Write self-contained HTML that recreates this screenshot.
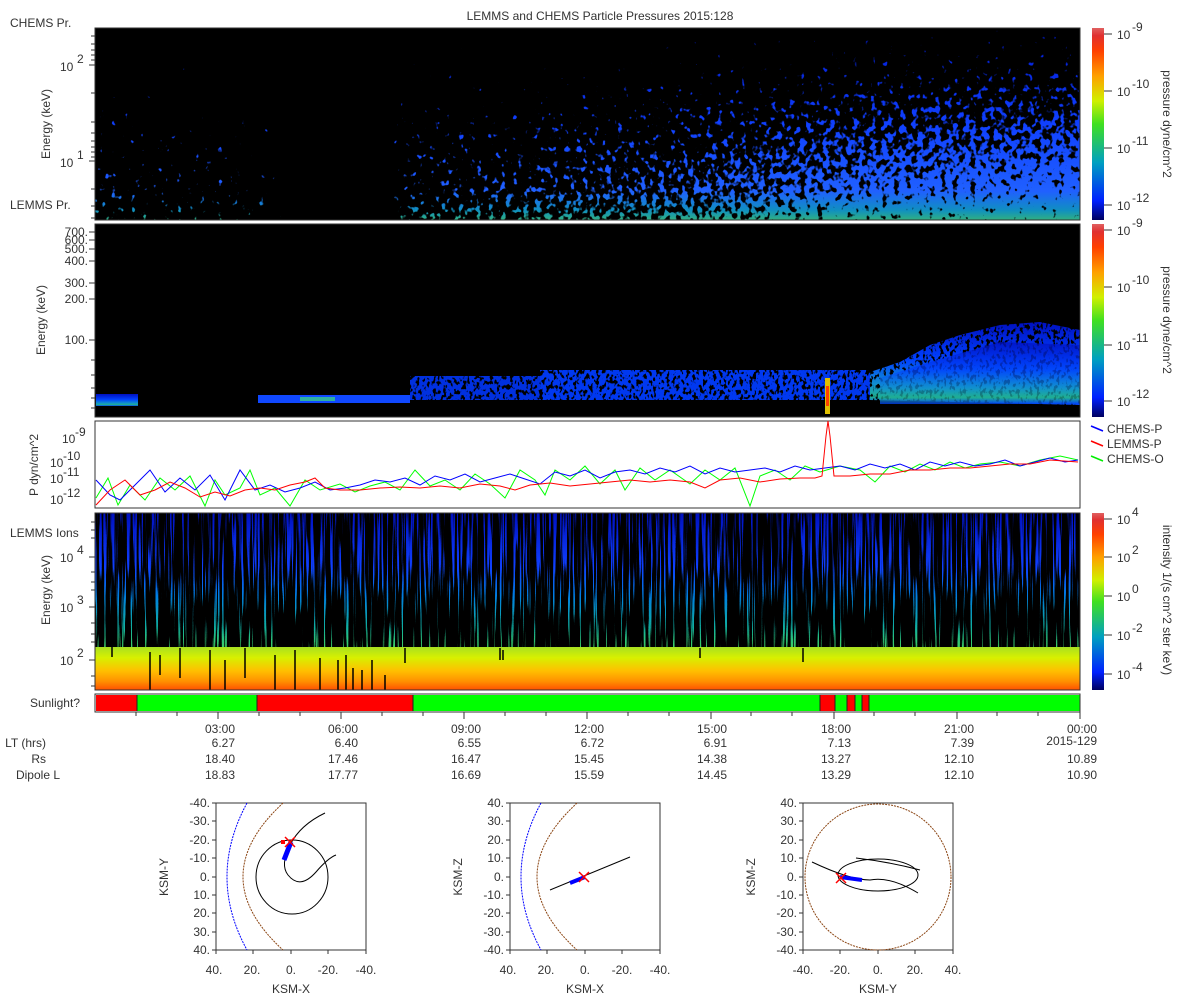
<!DOCTYPE html>
<html><head><meta charset="utf-8"><style>
html,body{margin:0;padding:0;background:#fff;}
svg{display:block;font-family:"Liberation Sans","DejaVu Sans",sans-serif;}
text{fill:#333;font-size:12px;}
</style></head><body>
<svg width="1200" height="1000" viewBox="0 0 1200 1000" xmlns="http://www.w3.org/2000/svg">
<defs>
<linearGradient id="cb" x1="0" y1="1" x2="0" y2="0">
<stop offset="0" stop-color="#000060"/><stop offset="0.1" stop-color="#0020ff"/><stop offset="0.3" stop-color="#00a0c0"/><stop offset="0.5" stop-color="#40e020"/><stop offset="0.62" stop-color="#d0f000"/><stop offset="0.75" stop-color="#ffa000"/><stop offset="0.88" stop-color="#ff4000"/><stop offset="0.96" stop-color="#e03030"/><stop offset="1" stop-color="#e06060"/>
</linearGradient>
<linearGradient id="p4" x1="0" y1="0" x2="0" y2="1">
<stop offset="0" stop-color="#a8e020"/><stop offset="0.25" stop-color="#d8f000"/><stop offset="0.55" stop-color="#ffc000"/><stop offset="0.8" stop-color="#ff9000"/><stop offset="1" stop-color="#ff5000"/>
</linearGradient>
<linearGradient id="p4c" x1="0" y1="0" x2="0" y2="1">
<stop offset="0" stop-color="#0010c0"/><stop offset="0.4" stop-color="#1040ff"/><stop offset="0.62" stop-color="#0080e0"/><stop offset="0.85" stop-color="#10b0a0"/><stop offset="1" stop-color="#40d060"/>
</linearGradient>
<linearGradient id="p2b" x1="0" y1="0" x2="0" y2="1">
<stop offset="0" stop-color="#0010c0"/><stop offset="0.45" stop-color="#0040ff"/><stop offset="0.75" stop-color="#1090d0"/><stop offset="0.9" stop-color="#20b090"/><stop offset="1" stop-color="#0040ff"/>
</linearGradient>
<linearGradient id="c1" x1="0" y1="0" x2="0" y2="1">
<stop offset="0" stop-color="#0018d0"/><stop offset="0.5" stop-color="#1040ff"/><stop offset="0.85" stop-color="#2060ff"/><stop offset="0.95" stop-color="#1090c0"/><stop offset="1" stop-color="#30b080"/>
</linearGradient>
<linearGradient id="h1" x1="0" y1="0" x2="1" y2="0">
<stop offset="0" stop-color="#606060"/><stop offset="0.18" stop-color="#505050"/><stop offset="0.2" stop-color="#202020"/><stop offset="0.29" stop-color="#202020"/><stop offset="0.31" stop-color="#686868"/><stop offset="0.6" stop-color="#909090"/><stop offset="0.78" stop-color="#b8b8b8"/><stop offset="1" stop-color="#d0d0d0"/>
</linearGradient>
<linearGradient id="v1" x1="0" y1="0" x2="0" y2="1">
<stop offset="0" stop-color="#000" stop-opacity="0.75"/><stop offset="0.5" stop-color="#000" stop-opacity="0.35"/><stop offset="1" stop-color="#000" stop-opacity="0"/>
</linearGradient>
<linearGradient id="v4" x1="0" y1="0" x2="0" y2="1">
<stop offset="0" stop-color="#7c7c7c"/><stop offset="0.4" stop-color="#787878"/><stop offset="0.6" stop-color="#5c5c5c"/><stop offset="0.85" stop-color="#707070"/><stop offset="1" stop-color="#909090"/>
</linearGradient>
<filter id="sp1" x="0" y="0" width="1" height="1" color-interpolation-filters="sRGB">
<feTurbulence type="fractalNoise" baseFrequency="0.17 0.15" numOctaves="2" seed="4" result="n"/>
<feColorMatrix in="n" type="matrix" values="1 0 0 0 0  1 0 0 0 0  1 0 0 0 0  0 0 0 0 1" result="no"/>
<feComposite in="SourceGraphic" in2="no" operator="arithmetic" k1="0" k2="1" k3="1" k4="-1" result="c"/>
<feColorMatrix in="c" type="matrix" values="0 0 0 0 1  0 0 0 0 1  0 0 0 0 1  10 0 0 0 0"/>
</filter>
<filter id="sp4" x="0" y="0" width="1" height="1" color-interpolation-filters="sRGB">
<feTurbulence type="fractalNoise" baseFrequency="0.45 0.012" numOctaves="2" seed="7" result="n"/>
<feColorMatrix in="n" type="matrix" values="1 0 0 0 0  1 0 0 0 0  1 0 0 0 0  0 0 0 0 1" result="no"/>
<feComposite in="SourceGraphic" in2="no" operator="arithmetic" k1="0" k2="1" k3="1" k4="-1" result="c"/>
<feColorMatrix in="c" type="matrix" values="0 0 0 0 1  0 0 0 0 1  0 0 0 0 1  10 0 0 0 0"/>
</filter>
<filter id="sp2" x="0" y="0" width="1" height="1" color-interpolation-filters="sRGB">
<feTurbulence type="fractalNoise" baseFrequency="0.3 0.2" numOctaves="2" seed="2" result="n"/>
<feColorMatrix in="n" type="matrix" values="1 0 0 0 0  1 0 0 0 0  1 0 0 0 0  0 0 0 0 1" result="no"/>
<feComposite in="SourceGraphic" in2="no" operator="arithmetic" k1="0" k2="1" k3="1" k4="-1" result="c"/>
<feColorMatrix in="c" type="matrix" values="0 0 0 0 1  0 0 0 0 1  0 0 0 0 1  10 0 0 0 0"/>
</filter>
<mask id="m1" maskUnits="userSpaceOnUse" x="95" y="28" width="985" height="192">
<g filter="url(#sp1)"><rect x="95" y="28" width="985" height="192" fill="url(#h1)"/><rect x="95" y="28" width="985" height="192" fill="url(#v1)"/></g>
</mask>
<mask id="m4" maskUnits="userSpaceOnUse" x="95" y="513" width="985" height="177">
<g filter="url(#sp4)"><rect x="95" y="513" width="985" height="177" fill="url(#v4)"/></g>
</mask>
<mask id="m2" maskUnits="userSpaceOnUse" x="95" y="224" width="985" height="193">
<g filter="url(#sp2)"><rect x="95" y="224" width="985" height="193" fill="#a0a0a0"/></g>
</mask>
</defs>
<text x="600" y="20" text-anchor="middle">LEMMS and CHEMS Particle Pressures  2015:128</text>
<text x="10" y="27">CHEMS Pr.</text>
<text x="10" y="209">LEMMS Pr.</text>
<text x="10" y="537">LEMMS Ions</text>

<!-- panel 1 -->
<rect x="95" y="28" width="985" height="192" fill="#000"/>
<rect x="95" y="28" width="985" height="192" fill="url(#c1)" mask="url(#m1)"/>
<rect x="95" y="28" width="985" height="192" fill="none" stroke="#333"/>
<text transform="translate(50,124) rotate(-90)" text-anchor="middle">Energy (keV)</text>
<text x="60" y="71" font-size="14">10</text><text x="77" y="63" font-size="10">2</text>
<text x="60" y="167" font-size="14">10</text><text x="77" y="159" font-size="10">1</text>
<path d="M89,65h6M89,161h6M91,36h4M91,44h4M91,50h4M91,55h4M91,60h4M91,93h4M91,122h4M91,133h4M91,141h4M91,147h4M91,152h4M91,157h4M91,189h4M91,206h4M91,218h4" stroke="#333"/>

<!-- panel 2 -->
<rect x="95" y="224" width="985" height="193" fill="#000"/>
<rect x="96" y="394" width="42" height="12" fill="url(#p2b)"/>
<rect x="258" y="395" width="152" height="8" fill="#1048ff"/>
<rect x="300" y="397" width="35" height="4" fill="#30b0a0"/>
<g mask="url(#m2)">
<rect x="410" y="376" width="130" height="24" fill="#0030e0"/>
<rect x="540" y="370" width="330" height="30" fill="#0038f0"/>
<path d="M870,400 L870,372 L900,362 L930,345 L960,335 L1000,325 L1040,322 L1080,330 L1080,405 Z" fill="url(#p2b)"/>
</g>
<path d="M880,404 L880,378 L930,362 L1000,342 L1080,345 L1080,404 Z" fill="url(#p2b)" opacity="0.75"/>
<rect x="825" y="378" width="5" height="36" fill="#e0c000"/>
<rect x="826" y="386" width="3" height="20" fill="#ff4000"/>
<rect x="95" y="224" width="985" height="193" fill="none" stroke="#333"/>
<text transform="translate(45,320) rotate(-90)" text-anchor="middle">Energy (keV)</text>
<g font-size="11" text-anchor="end">
<text x="88" y="236">700.</text><text x="88" y="244">600.</text><text x="88" y="253">500.</text><text x="88" y="265">400.</text><text x="88" y="287">300.</text><text x="88" y="303">200.</text><text x="88" y="344">100.</text></g>
<path d="M89,232h6M89,240h6M89,249h6M89,261h6M89,283h6M89,299h6M89,340h6M91,360h4M91,375h4M91,388h4M91,398h4M91,408h4" stroke="#333"/>

<!-- panel 3 -->
<rect x="95" y="421" width="985" height="87" fill="#fff" stroke="#333"/>
<polyline fill="none" stroke="#0f0" points="96,498 108,478 118,505 130,485 145,500 160,478 175,490 190,476 205,506 215,480 225,495 240,488 250,470 260,495 275,488 290,506 305,480 320,490 340,484 355,492 370,486 385,482 400,490 415,470 430,486 445,480 460,490 475,474 490,484 505,498 520,470 535,480 545,495 555,470 570,480 585,466 600,484 615,470 625,490 640,468 655,480 670,470 690,484 705,470 720,480 735,468 750,506 760,476 775,470 790,480 805,466 820,472 840,466 860,470 875,482 890,466 905,472 920,464 935,470 950,462 965,468 980,464 1000,462 1020,466 1040,460 1060,456 1078,460"/>
<polyline fill="none" stroke="#00f" points="96,480 110,495 120,500 135,485 150,470 165,492 180,478 195,490 210,475 225,500 240,470 255,490 270,485 285,492 300,488 315,482 330,490 345,488 360,485 375,480 390,482 405,478 420,485 435,476 450,480 465,474 480,482 495,478 510,474 525,479 540,484 555,472 570,476 585,470 600,478 615,472 630,470 645,474 660,468 675,472 690,466 705,474 720,468 735,472 750,470 765,468 780,472 795,466 810,470 825,468 840,466 855,470 870,464 885,468 900,464 915,470 930,462 945,466 960,462 975,466 990,464 1005,460 1020,466 1035,462 1050,458 1065,462 1078,460"/>
<polyline fill="none" stroke="#f00" points="96,505 110,490 125,480 140,495 155,490 170,482 185,488 200,497 215,492 230,496 245,490 260,488 275,490 290,485 305,482 315,478 325,488 340,490 360,490 380,488 400,487 420,488 440,486 460,488 480,484 500,486 515,490 530,485 550,483 570,486 590,484 610,482 630,480 650,482 670,480 690,482 705,488 720,480 740,478 760,482 780,479 800,478 815,478 822,476 826,436 828,421 830,436 834,476 850,476 870,474 890,474 910,470 930,470 950,468 970,468 990,466 1010,464 1030,464 1050,460 1078,462"/>
<text transform="translate(38,465) rotate(-90)" text-anchor="middle">P dyn/cm^2</text>
<text x="62" y="443">10</text><text x="75" y="436" font-size="9">-9</text>
<text x="50" y="467">10</text><text x="63" y="460" font-size="9">-10</text>
<text x="50" y="483">10</text><text x="63" y="476" font-size="9">-11</text>
<text x="50" y="504">10</text><text x="63" y="497" font-size="9">-12</text>

<!-- panel 4 -->
<rect x="95" y="513" width="985" height="177" fill="#000"/>
<rect x="95" y="513" width="985" height="135" fill="url(#p4c)" mask="url(#m4)"/>
<rect x="95" y="647" width="985" height="43" fill="url(#p4)"/>
<path d="M112,647v10M150,652v38M160,655v20M180,648v30M210,650v40M225,660v30M245,648v30M275,655v35M295,650v40M320,658v32M338,660v30M346,655v35M353,668v22M362,670v20M372,660v30M385,675v15M405,648v15M500,648v12M503,650v10M700,648v10M803,648v14" stroke="#000" stroke-width="1.5"/>
<rect x="95" y="513" width="985" height="177" fill="none" stroke="#333"/>
<text transform="translate(50,590) rotate(-90)" text-anchor="middle">Energy (keV)</text>
<text x="60" y="562" font-size="14">10</text><text x="77" y="554" font-size="10">4</text>
<text x="60" y="612" font-size="14">10</text><text x="77" y="604" font-size="10">3</text>
<text x="60" y="665" font-size="14">10</text><text x="77" y="657" font-size="10">2</text>
<path d="M89,557h6M89,607h6M89,660h6M91,522h4M91,530h4M91,538h4M91,572h4M91,582h4M91,590h4M91,623h4M91,634h4M91,642h4M91,676h4M91,686h4" stroke="#333"/>

<!-- colorbars -->
<rect x="1092" y="28" width="12" height="192" fill="url(#cb)"/>
<rect x="1092" y="224" width="12" height="193" fill="url(#cb)"/>
<rect x="1092" y="513" width="12" height="177" fill="url(#cb)"/>
<path d="M1104,34h8M1104,91h8M1104,148h8M1104,205h8M1104,230h8M1104,287h8M1104,345h8M1104,401h8M1104,519h8M1104,557h8M1104,596h8M1104,635h8M1104,674h8" stroke="#333"/>
<g font-size="13">
<text x="1117" y="39">10</text><text x="1132" y="31" font-size="10">-9</text>
<text x="1117" y="96">10</text><text x="1132" y="88" font-size="10">-10</text>
<text x="1117" y="153">10</text><text x="1132" y="145" font-size="10">-11</text>
<text x="1117" y="210">10</text><text x="1132" y="202" font-size="10">-12</text>
<text x="1117" y="235">10</text><text x="1132" y="227" font-size="10">-9</text>
<text x="1117" y="292">10</text><text x="1132" y="284" font-size="10">-10</text>
<text x="1117" y="350">10</text><text x="1132" y="342" font-size="10">-11</text>
<text x="1117" y="406">10</text><text x="1132" y="398" font-size="10">-12</text>
<text x="1117" y="524">10</text><text x="1132" y="516" font-size="10">4</text>
<text x="1117" y="562">10</text><text x="1132" y="554" font-size="10">2</text>
<text x="1117" y="601">10</text><text x="1132" y="593" font-size="10">0</text>
<text x="1117" y="640">10</text><text x="1132" y="632" font-size="10">-2</text>
<text x="1117" y="679">10</text><text x="1132" y="671" font-size="10">-4</text>
</g>
<text transform="translate(1163,124) rotate(90)" text-anchor="middle">pressure dyne/cm^2</text>
<text transform="translate(1163,320) rotate(90)" text-anchor="middle">pressure dyne/cm^2</text>
<text transform="translate(1163,600) rotate(90)" text-anchor="middle">intensity 1/(s cm^2 ster keV)</text>
<!-- legend -->
<line x1="1091" y1="426" x2="1103" y2="431" stroke="#00f" stroke-width="1.5"/><text x="1107" y="433">CHEMS-P</text>
<line x1="1091" y1="441" x2="1103" y2="446" stroke="#f00" stroke-width="1.5"/><text x="1107" y="448">LEMMS-P</text>
<line x1="1091" y1="456" x2="1103" y2="461" stroke="#0e0" stroke-width="1.5"/><text x="1107" y="463">CHEMS-O</text>

<!-- sunlight -->
<text x="80" y="707" text-anchor="end">Sunlight?</text>
<rect x="96" y="695" width="41" height="16" fill="#f00"/>
<rect x="137" y="695" width="120" height="16" fill="#0f0"/>
<rect x="257" y="695" width="156" height="16" fill="#f00"/>
<rect x="413" y="695" width="407" height="16" fill="#0f0"/>
<rect x="820" y="695" width="15" height="16" fill="#f00"/>
<rect x="835" y="695" width="12" height="16" fill="#0f0"/>
<rect x="847" y="695" width="8" height="16" fill="#f00"/>
<rect x="855" y="695" width="7" height="16" fill="#0f0"/>
<rect x="862" y="695" width="7" height="16" fill="#f00"/>
<rect x="869" y="695" width="211" height="16" fill="#0f0"/>
<path d="M137,695v16M257,695v16M413,695v16M820,695v16M835,695v16M847,695v16M855,695v16M862,695v16M869,695v16" stroke="#222"/>
<rect x="95" y="694" width="985" height="18" fill="none" stroke="#333"/>
<path stroke="#333" d="M136,712v4M177,712v4M259,712v4M300,712v4M382,712v4M423,712v4M505,712v4M546,712v4M628,712v4M669,712v4M751,712v4M792,712v4M874,712v4M915,712v4M997,712v4M1038,712v4M218,712v7M341,712v7M464,712v7M587,712v7M711,712v7M834,712v7M957,712v7M1080,712v7"/>
<g text-anchor="end">
<text x="46" y="747">LT (hrs)</text>
<text x="46" y="763">Rs</text>
<text x="60" y="779">Dipole L</text>
<text x="235" y="733">03:00</text><text x="358" y="733">06:00</text><text x="481" y="733">09:00</text><text x="604" y="733">12:00</text><text x="727" y="733">15:00</text><text x="851" y="733">18:00</text><text x="974" y="733">21:00</text><text x="1097" y="733">00:00</text>
<text x="235" y="747">6.27</text><text x="358" y="747">6.40</text><text x="481" y="747">6.55</text><text x="604" y="747">6.72</text><text x="727" y="747">6.91</text><text x="851" y="747">7.13</text><text x="974" y="747">7.39</text>
<text x="235" y="763">18.40</text><text x="358" y="763">17.46</text><text x="481" y="763">16.47</text><text x="604" y="763">15.45</text><text x="727" y="763">14.38</text><text x="851" y="763">13.27</text><text x="974" y="763">12.10</text><text x="1097" y="763">10.89</text>
<text x="235" y="779">18.83</text><text x="358" y="779">17.77</text><text x="481" y="779">16.69</text><text x="604" y="779">15.59</text><text x="727" y="779">14.45</text><text x="851" y="779">13.29</text><text x="974" y="779">12.10</text><text x="1097" y="779">10.90</text>
<text x="1097" y="745">2015-129</text>
</g>

<!-- orbit plot 1 -->
<g>
<rect x="216" y="803" width="150" height="147" fill="none" stroke="#333"/>
<path d="M247,803 Q207,877 247,950" fill="none" stroke="#00f" stroke-dasharray="2,1"/>
<path d="M283,803 Q203,877 283,950" fill="none" stroke="#8b4513" stroke-dasharray="2,1"/>
<ellipse cx="292" cy="877" rx="36" ry="37" fill="none" stroke="#000"/>
<path d="M325,813 Q300,825 290,845 Q280,865 288,875 Q300,890 316,872 Q328,858 336,855" fill="none" stroke="#000"/>
<path d="M284,860 L291,842" stroke="#00f" stroke-width="5"/>
<rect x="281" y="840" width="4" height="4" fill="#f00"/>
<path d="M285,837l10,10M295,837l-10,10" stroke="#f00" stroke-width="1.5"/>
</g>
<!-- orbit plot 2 -->
<g>
<rect x="510" y="803" width="150" height="147" fill="none" stroke="#333"/>
<path d="M541,803 Q501,877 541,950" fill="none" stroke="#00f" stroke-dasharray="2,1"/>
<path d="M577,803 Q497,877 577,950" fill="none" stroke="#8b4513" stroke-dasharray="2,1"/>
<line x1="550" y1="890" x2="630" y2="857" stroke="#000"/>
<line x1="570" y1="883" x2="585" y2="877" stroke="#00f" stroke-width="4"/>
<path d="M579,872l10,10M589,872l-10,10" stroke="#f00" stroke-width="1.5"/>
</g>
<!-- orbit plot 3 -->
<g>
<rect x="803" y="803" width="150" height="147" fill="none" stroke="#333"/>
<circle cx="878" cy="877" r="73" fill="none" stroke="#8b4513" stroke-dasharray="2,1"/>
<ellipse cx="878" cy="875" rx="40" ry="16" fill="none" stroke="#000"/>
<path d="M812,862 Q850,880 870,880 Q890,876 918,893 M856,858 Q890,862 920,870" fill="none" stroke="#000"/>
<line x1="840" y1="877" x2="862" y2="880" stroke="#00f" stroke-width="4"/>
<path d="M836,873l10,10M846,873l-10,10" stroke="#f00" stroke-width="1.5"/>
</g>
<g text-anchor="end" font-size="12">
<text x="210" y="807">-40.</text><text x="210" y="825">-30.</text><text x="210" y="844">-20.</text><text x="210" y="862">-10.</text><text x="210" y="881">0.</text><text x="210" y="899">10.</text><text x="210" y="917">20.</text><text x="210" y="936">30.</text><text x="210" y="954">40.</text>
<text x="504" y="807">40.</text><text x="504" y="825">30.</text><text x="504" y="844">20.</text><text x="504" y="862">10.</text><text x="504" y="881">0.</text><text x="504" y="899">-10.</text><text x="504" y="917">-20.</text><text x="504" y="936">-30.</text><text x="504" y="954">-40.</text>
<text x="797" y="807">40.</text><text x="797" y="825">30.</text><text x="797" y="844">20.</text><text x="797" y="862">10.</text><text x="797" y="881">0.</text><text x="797" y="899">-10.</text><text x="797" y="917">-20.</text><text x="797" y="936">-30.</text><text x="797" y="954">-40.</text>
</g>
<path stroke="#333" d="M212,803h4M212,821h4M212,840h4M212,858h4M212,877h4M212,895h4M212,913h4M212,932h4M212,950h4M506,803h4M506,821h4M506,840h4M506,858h4M506,877h4M506,895h4M506,913h4M506,932h4M506,950h4M799,803h4M799,821h4M799,840h4M799,858h4M799,877h4M799,895h4M799,913h4M799,932h4M799,950h4M216,950v4M253,950v4M291,950v4M328,950v4M366,950v4M510,950v4M547,950v4M585,950v4M622,950v4M660,950v4M803,950v4M840,950v4M878,950v4M915,950v4M953,950v4"/>
<g text-anchor="middle">
<text x="214" y="974">40.</text><text x="252" y="974">20.</text><text x="291" y="974">0.</text><text x="328" y="974">-20.</text><text x="366" y="974">-40.</text>
<text x="508" y="974">40.</text><text x="546" y="974">20.</text><text x="585" y="974">0.</text><text x="622" y="974">-20.</text><text x="660" y="974">-40.</text>
<text x="803" y="974">-40.</text><text x="840" y="974">-20.</text><text x="878" y="974">0.</text><text x="915" y="974">20.</text><text x="953" y="974">40.</text>
<text x="291" y="993">KSM-X</text><text x="585" y="993">KSM-X</text><text x="878" y="993">KSM-Y</text>
<text transform="translate(168,877) rotate(-90)">KSM-Y</text>
<text transform="translate(462,877) rotate(-90)">KSM-Z</text>
<text transform="translate(755,877) rotate(-90)">KSM-Z</text>
</g>
</svg>
</body></html>
